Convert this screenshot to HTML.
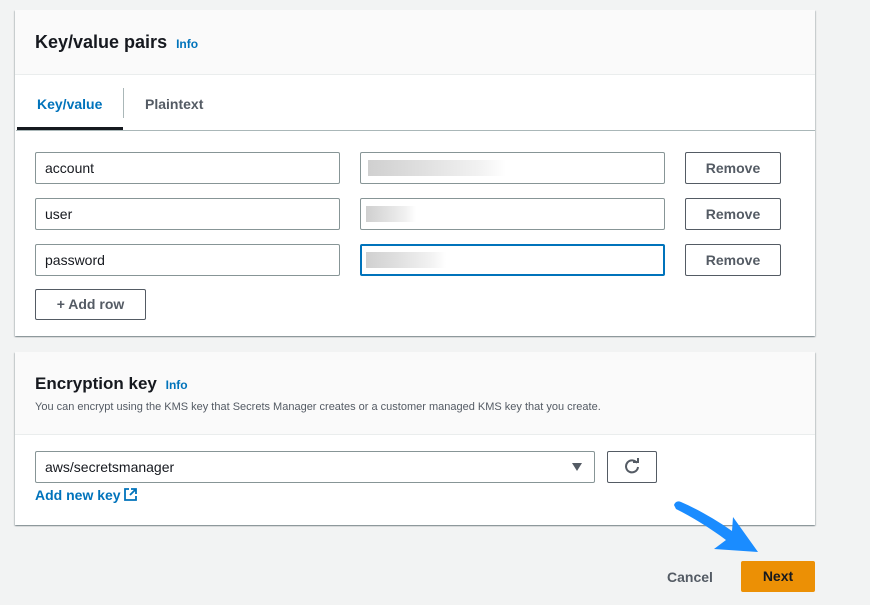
<!DOCTYPE html><html><head><style>
body{margin:0;width:870px;height:605px;background:#f2f3f3;font-family:"Liberation Sans",sans-serif;position:relative;overflow:hidden;color:#16191f}
.card{position:absolute;left:15px;width:800px;background:#fff;box-shadow:0 1px 1px rgba(0,28,36,.3),1px 1px 1px rgba(0,28,36,.15),-1px 1px 1px rgba(0,28,36,.15)}
.hdr{background:#fafafa;border-bottom:1px solid #eaeded}
.abs{position:absolute}
.inp{position:absolute;border:1px solid #879596;border-radius:2px;box-sizing:border-box;height:32px;font-size:14px;line-height:30px;padding-left:9px;background:#fff}
.btn{position:absolute;border:1px solid #545b64;border-radius:2px;box-sizing:border-box;font-weight:bold;font-size:14px;color:#545b64;text-align:center;background:#fff}
.blur{position:absolute;height:16px;background:linear-gradient(90deg,#c4c4c4,#d8d8d8 40%,#eee 80%,#fff);opacity:.8}
.info{color:#0073bb;font-size:12px;font-weight:bold}
</style></head><body>
<div class="card" style="top:10px;height:326px">
<div class="hdr" style="height:64px"></div>
<div class="abs" style="left:20px;top:22px;font-size:18px;font-weight:bold">Key/value pairs <span class="info" style="margin-left:4px">Info</span></div>
<div class="abs" style="left:1px;right:0;top:120px;border-bottom:1px solid #aab7b8"></div>
<div class="abs" style="left:2px;top:117px;width:106px;height:3px;background:#16191f"></div>
<div class="abs" style="left:22px;top:86px;font-size:14px;font-weight:bold;color:#0073bb">Key/value</div>
<div class="abs" style="left:108px;top:78px;width:1px;height:30px;background:#aab7b8"></div>
<div class="abs" style="left:130px;top:86px;font-size:14px;font-weight:bold;color:#545b64">Plaintext</div>
</div>
<div class="inp" style="left:35px;top:152px;width:305px">account</div>
<div class="inp" style="left:35px;top:198px;width:305px">user</div>
<div class="inp" style="left:35px;top:244px;width:305px">password</div>
<div class="inp" style="left:360px;top:152px;width:305px"></div>
<div class="inp" style="left:360px;top:198px;width:305px"></div>
<div class="inp" style="left:360px;top:244px;width:305px;border:2px solid #0073bb"></div>
<div class="blur" style="left:368px;top:160px;width:138px"></div>
<div class="blur" style="left:366px;top:206px;width:50px"></div>
<div class="blur" style="left:366px;top:252px;width:80px"></div>
<div class="btn" style="left:685px;top:152px;width:96px;height:32px;line-height:30px">Remove</div>
<div class="btn" style="left:685px;top:198px;width:96px;height:32px;line-height:30px">Remove</div>
<div class="btn" style="left:685px;top:244px;width:96px;height:32px;line-height:30px">Remove</div>
<div class="btn" style="left:35px;top:289px;width:111px;height:31px;line-height:29px">+ Add row</div>

<div class="card" style="top:352px;height:173px">
<div class="hdr" style="height:82px"></div>
<div class="abs" style="left:20px;top:22px;font-size:17px;font-weight:bold">Encryption key <span class="info" style="margin-left:4px">Info</span></div>
<div class="abs" style="left:20px;top:49px;font-size:11px;color:#545b64">You can encrypt using the KMS key that Secrets Manager creates or a customer managed KMS key that you create.</div>
</div>
<div class="inp" style="left:35px;top:451px;width:560px">aws/secretsmanager</div>
<div class="abs" style="left:572px;top:463px;width:0;height:0;border-left:5px solid transparent;border-right:5px solid transparent;border-top:8px solid #545b64"></div>
<div class="btn" style="left:607px;top:451px;width:50px;height:32px"><svg width="18" height="18" viewBox="0 0 18 18" style="margin-top:6px"><path d="M14 5A6 6 0 1 0 15 9" fill="none" stroke="#545b64" stroke-width="2"/><path d="M10 4h5V0" fill="none" stroke="#545b64" stroke-width="2"/></svg></div>
<div class="abs" style="left:35px;top:487px;font-size:14px;font-weight:bold;color:#0073bb">Add new key <svg width="13" height="13" viewBox="0 0 13 13" style="vertical-align:-1px"><path d="M5 1H1v11h11V8M7 1h5v5M12 1L6 7" fill="none" stroke="#0073bb" stroke-width="1.8"/></svg></div>

<svg class="abs" style="left:0;top:0" width="870" height="605"><path d="M674 505 Q676 500 681 502 C697 509 715 519 732 531 L733 517 L758 552 L714 549 L726 540 C710 528 692 517 676 509 Z" fill="#1a8cff"/></svg>
<div class="abs" style="left:667px;top:569px;font-size:14px;font-weight:bold;color:#545b64">Cancel</div>
<div class="abs" style="left:741px;top:561px;width:74px;height:31px;background:#ec9005;border-radius:2px;text-align:center;line-height:31px;font-size:14px;font-weight:bold">Next</div>
</body></html>
